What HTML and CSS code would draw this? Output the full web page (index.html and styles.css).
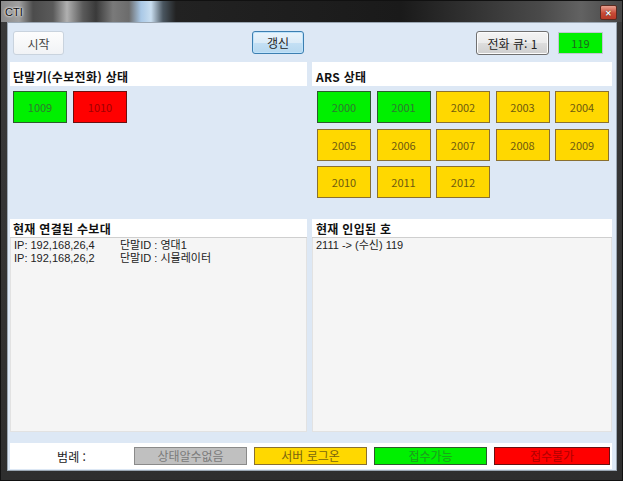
FILE: index.html
```html
<!DOCTYPE html>
<html lang="ko">

<head>
    <meta charset="UTF-8">
    <meta name="viewport" content="width=device-width, initial-scale=1.0">
    <title>CTI</title>
    <link rel="stylesheet" href="styles.css">
</head>

<body>

    <div class="window">
        <div class="titlebar">
            <span class="title">CTI</span>
            <span class="close">✕</span>
        </div>

        <div class="client">
            <div class="toolbar">
                <button class="btn btn-start">시작</button>
                <button class="btn btn-refresh">갱신</button>
                <button class="btn btn-queue">전화 큐: 1</button>
                <div class="queue-box">119</div>
            </div>

            <div class="panels panels-top">
                <section class="panel">
                    <h2 class="panel-head">단말기(수보전화) 상태</h2>
                    <div class="tiles tiles-phone">
                        <div class="tile on">1009</div>
                        <div class="tile busy">1010</div>
                    </div>
                </section>
                <section class="panel">
                    <h2 class="panel-head ars">ARS 상태</h2>
                    <div class="tiles tiles-ars">
                        <div class="tile on">2000</div>
                        <div class="tile on">2001</div>
                        <div class="tile login">2002</div>
                        <div class="tile login">2003</div>
                        <div class="tile login">2004</div>
                        <div class="tile login">2005</div>
                        <div class="tile login">2006</div>
                        <div class="tile login">2007</div>
                        <div class="tile login">2008</div>
                        <div class="tile login">2009</div>
                        <div class="tile login">2010</div>
                        <div class="tile login">2011</div>
                        <div class="tile login">2012</div>
                    </div>
                </section>
            </div>

            <div class="panels panels-bottom">
                <section class="list-panel">
                    <h2 class="list-head">현재 연결된 수보대</h2>
                    <div class="list">
                        <div class="row"><span>IP: 192,168,26,4</span><span>단말ID : 영대1</span></div>
                        <div class="row"><span>IP: 192,168,26,2</span><span>단말ID : 시뮬레이터</span></div>
                    </div>
                </section>
                <section class="list-panel">
                    <h2 class="list-head ars">현재 인입된 호</h2>
                    <div class="list">
                        <div class="row single">2111 -&gt; (수신) 119</div>
                    </div>
                </section>
            </div>

            <div class="legend">
                <span class="legend-label">범례 :</span>
                <span class="legend-box unknown">상태알수없음</span>
                <span class="legend-box login">서버 로그온</span>
                <span class="legend-box on">접수가능</span>
                <span class="legend-box busy">접수불가</span>
            </div>
        </div>
    </div>

</body>

</html>
```

FILE: styles.css
```css
body,
html {
    margin: 0;
    height: 100%;
    background-color: #2a2a2a;
    font-family: "Noto Sans CJK KR", "Noto Sans", sans-serif;
}

.window {
    width: 623px;
    height: 481px;
    box-sizing: border-box;
    border: 1px solid #111;
    background: linear-gradient(to bottom, #3a3a3a, #2e2e2e);
    display: flex;
    flex-direction: column;
}

.titlebar {
    height: 21px;
    display: flex;
    align-items: center;
    padding: 0 5px 0 4px;
    background: linear-gradient(to right,
        #8a8a8a 0, #a0a0a0 18px, #4c4c4c 32px, #5a5a5a 52px,
        #b0b0b0 66px, #5a5a5a 82px, #3a3a3a 95px, #7a7a7a 112px,
        #6c6c6c 128px, #a9c8e6 140px, #c9def0 150px, #4a5660 162px,
        #222 175px, #1a1a1a 400px, #4a4a4a 540px, #626262 580px, #444 623px);
}

.title {
    font-family: "Liberation Sans", Arial, sans-serif;
    font-size: 11px;
    color: #111;
    text-shadow: 0 0 3px #fff, 0 0 2px #fff;
}

.close {
    margin-left: auto;
    width: 15px;
    height: 13px;
    margin-top: 2px;
    border: 1px solid #5a2a20;
    border-radius: 2px;
    background: linear-gradient(to bottom, #e8a090, #c84a36 55%, #b83a28);
    color: #fff;
    font-size: 8px;
    line-height: 13px;
    text-align: center;
    font-weight: bold;
    text-shadow: 0 0 1px #000;
}

.client {
    margin: 0 5px 0 6px;
    height: 449px;
    box-sizing: border-box;
    border: 1px solid #9aa6b2;
    background-color: #dde8f5;
    padding: 0 4px 0 2px;
    display: flex;
    flex-direction: column;
}

.toolbar {
    height: 39px;
    display: flex;
    align-items: flex-start;
    padding-top: 8px;
    box-sizing: border-box;
}

.btn {
    height: 24px;
    padding: 0;
    font-family: "Noto Sans CJK KR", sans-serif;
    font-size: 12px;
    color: #222;
    border-radius: 3px;
    cursor: pointer;
}

.btn-start {
    width: 51px;
    margin-left: 3px;
    border: 1px solid #c9d3de;
    background: linear-gradient(to bottom, #fdfdfd, #f1f3f6);
    color: #444;
}

.btn-refresh {
    width: 52px;
    height: 23px;
    margin-left: 188px;
    border: 1px solid #3c7fb1;
    background: linear-gradient(to bottom, #eaf4fb 0, #dcecf8 50%, #c4e0f4 51%, #b6d8f0 100%);
    box-shadow: inset 0 0 0 1px #bfe3fb;
}

.btn-queue {
    width: 73px;
    margin-left: 172px;
    border: 1px solid #707070;
    background: linear-gradient(to bottom, #f4f4f4 0, #ebebeb 50%, #dddddd 51%, #cfcfcf 100%);
    box-shadow: inset 0 0 0 1px #fcfcfc;
}

.queue-box {
    width: 45px;
    height: 22px;
    margin: 1px 0 0 9px;
    box-sizing: border-box;
    border: 1px solid #c0c8d0;
    background-color: #00f000;
    color: #1e6a1e;
    font-size: 11px;
    line-height: 20px;
    text-align: center;
}

.panels {
    display: grid;
    grid-template-columns: 297px 300px;
    column-gap: 5px;
}

.panels-top {
    height: 150px;
}

.panels-bottom {
    height: 213px;
    margin-top: 7px;
}

.panel-head,
.list-head {
    margin: 0;
    background-color: #fff;
    color: #111;
    font-size: 12px;
    font-weight: bold;
    letter-spacing: 0.3px;
}

.panel-head {
    height: 24px;
    box-sizing: border-box;
    padding: 6px 0 0 3px;
    line-height: 17px;
}

.panel-head.ars,
.list-head.ars {
    padding-left: 4px;
}

.tiles {
    display: grid;
    grid-template-columns: repeat(5, 54px);
    grid-auto-rows: 32px;
    padding-top: 5px;
}

.tiles-phone {
    column-gap: 6px;
    padding-left: 3px;
}

.tiles-ars {
    column-gap: 5.5px;
    row-gap: 5.5px;
    padding-left: 5px;
}

.tile {
    box-sizing: border-box;
    border: 1px solid #555;
    font-size: 11px;
    line-height: 30px;
    text-align: center;
}

.tile.on {
    background-color: #00f000;
    border-color: #2d5a2d;
    color: #2f7a2f;
}

.tile.busy {
    background-color: #ff0000;
    border-color: #6a1010;
    color: #a00000;
}

.tile.login {
    background-color: #ffd800;
    border-color: #8a7030;
    color: #6e5a10;
}

.list-panel {
    display: flex;
    flex-direction: column;
}

.list-head {
    height: 19px;
    box-sizing: border-box;
    padding: 2px 0 0 3px;
    line-height: 16px;
    border-bottom: 1px solid #cfcfcf;
}

.list {
    flex: 1;
    background-color: #f5f5f5;
    border: 1px solid #e2e2e2;
    border-top: none;
    padding: 1px 3px;
    font-family: "Liberation Sans", "Noto Sans CJK KR", sans-serif;
    font-size: 11px;
    line-height: 13px;
    color: #222;
}

.row {
    display: grid;
    grid-template-columns: 106px auto;
}

.row.single {
    display: block;
}

.legend {
    margin-top: 11px;
    height: 26px;
    background-color: #fff;
    display: grid;
    grid-template-columns: 117px 113px 113px 113px 116px;
    column-gap: 7px;
    align-items: center;
    font-size: 12px;
}

.legend-label {
    text-align: center;
    padding-left: 6px;
    color: #222;
}

.legend-box {
    height: 18px;
    box-sizing: border-box;
    border: 1px solid #777;
    line-height: 16px;
    text-align: center;
}

.legend-box.unknown {
    background-color: #c0c0c0;
    border-color: #8a8a8a;
    color: #7a7a7a;
}

.legend-box.login {
    background-color: #ffd800;
    border-color: #8a7030;
    color: #7a6410;
}

.legend-box.on {
    background-color: #00f000;
    border-color: #2d5a2d;
    color: #1e9a1e;
}

.legend-box.busy {
    background-color: #ff0000;
    border-color: #6a1010;
    color: #b00000;
}
```
